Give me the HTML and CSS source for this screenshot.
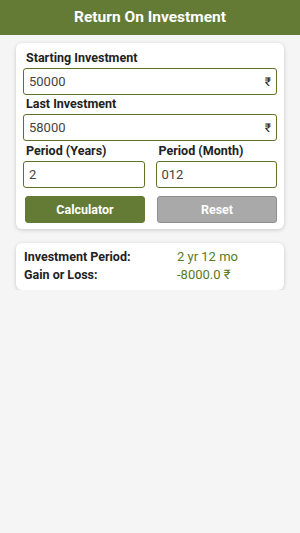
FILE: index.html
```html
<!DOCTYPE html>
<html lang="en">
<head>
  <meta charset="UTF-8">
  <meta name="viewport" content="width=device-width, initial-scale=1.0">
  <title>Return On Investment</title>
  <link rel="stylesheet" href="styles.css">
</head>
<body>
  <div class="header">Return On Investment</div>

  <div class="card form">
    <div class="label">Starting Investment</div>
    <div class="field">
      <input type="text" value="50000">
      <span class="unit">₹</span>
    </div>

    <div class="label">Last Investment</div>
    <div class="field">
      <input type="text" value="58000">
      <span class="unit">₹</span>
    </div>

    <div class="row">
      <div class="col">
        <div class="label">Period (Years)</div>
        <div class="field"><input type="text" value="2"></div>
      </div>
      <div class="col">
        <div class="label">Period (Month)</div>
        <div class="field"><input type="text" value="012"></div>
      </div>
    </div>

    <div class="row buttons">
      <button class="button calc">Calculator</button>
      <button class="button reset">Reset</button>
    </div>
  </div>

  <div class="card result">
    <div class="result-row">
      <span class="result-label">Investment Period:</span>
      <span class="result-value">2 yr 12 mo</span>
    </div>
    <div class="result-row">
      <span class="result-label">Gain or Loss:</span>
      <span class="result-value">-8000.0 ₹</span>
    </div>
  </div>
</body>
</html>
```

FILE: styles.css
```css
body {
  margin: 0;
  font-family: Roboto, "Liberation Sans", sans-serif;
  background-color: #f5f5f5;
  color: #222;
}

.header {
  height: 35px;
  line-height: 35px;
  background-color: #637b34;
  color: #fff;
  font-size: 15.5px;
  font-weight: bold;
  text-align: center;
}

.card {
  background: #fff;
  margin: 0 16px;
  border-radius: 6px;
  box-shadow: 0 1px 4px rgba(0, 0, 0, 0.18);
}

.form {
  margin-top: 8px;
  padding: 8px 7px 6px 7px;
}

.label {
  font-size: 12.5px;
  font-weight: bold;
  color: #222;
  line-height: 14px;
  padding-left: 3px;
  margin-bottom: 3px;
}

.field {
  display: flex;
  align-items: center;
  height: 27px;
  border: 1.5px solid #5c7424;
  border-radius: 3px;
  box-sizing: border-box;
  margin-bottom: 2px;
  padding: 0 5px 0 5px;
}

.field input {
  flex: 1;
  width: 100%;
  min-width: 0;
  border: none;
  outline: none;
  background: transparent;
  font-family: Roboto, "Liberation Sans", sans-serif;
  font-size: 13px;
  color: #444;
  padding: 0;
}

.unit {
  font-size: 12px;
  color: #222;
}

.row {
  display: flex;
  gap: 11px;
}

.col {
  flex: 1;
  min-width: 0;
}

.row .label {
  margin-top: 1px;
}

.buttons {
  margin-top: 6px;
}

.button {
  flex: 1;
  min-width: 0;
  height: 27px;
  border-radius: 3px;
  font-family: Roboto, "Liberation Sans", sans-serif;
  font-size: 12.5px;
  font-weight: bold;
  color: #fff;
}

.button.calc {
  margin: 0 1px 0 2px;
  background-color: #637b34;
  border: 1px solid #637b34;
}

.button.reset {
  background-color: #a9a9a9;
  border: 1px solid #8e8e8e;
}

.result {
  margin-top: 14px;
  padding: 5px 8px 6px 8px;
}

.result-row {
  display: flex;
  font-size: 12.5px;
  line-height: 18px;
}

.result-label {
  width: 153px;
  font-weight: bold;
  color: #222;
}

.result-value {
  color: #5a7a1e;
  font-size: 13px;
}
```
